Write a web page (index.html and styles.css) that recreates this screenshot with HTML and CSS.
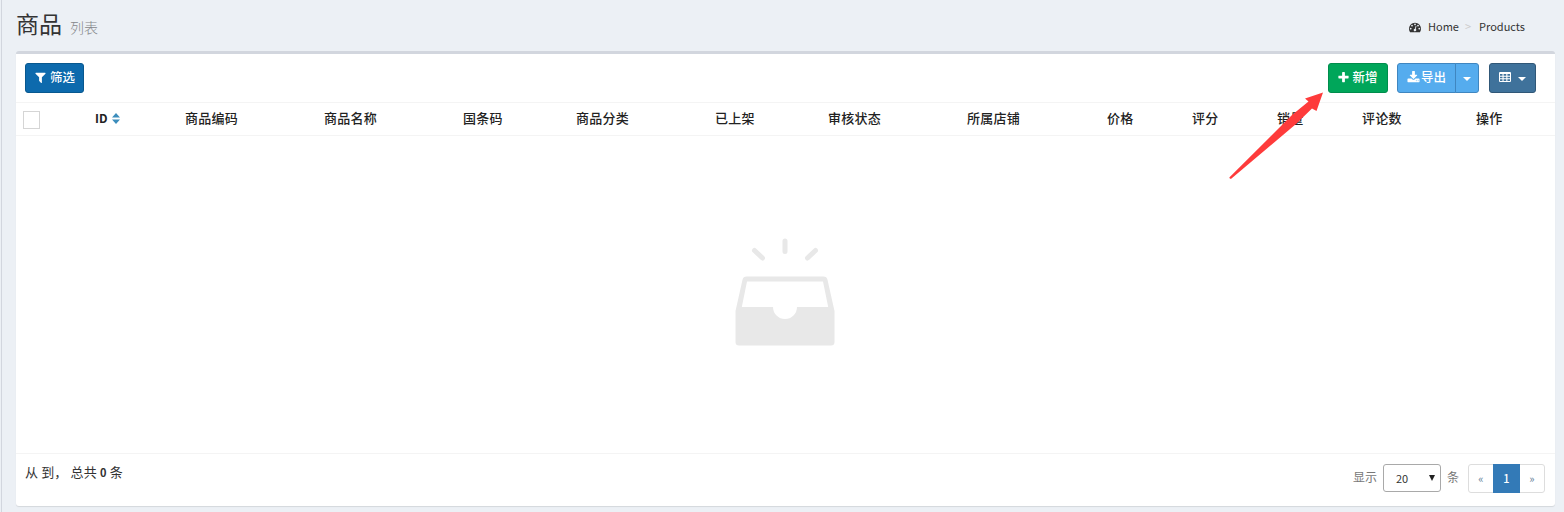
FILE: index.html
```html
<!DOCTYPE html>
<html lang="zh-CN">
<head>
<meta charset="utf-8">
<title>商品</title>
<link rel="stylesheet" href="styles.css">
</head>
<body>
<div class="page">
  <header class="content-header">
    <h1 class="title">商品<small class="subtitle">列表</small></h1>
    <nav class="breadcrumb">
      <svg class="icon-dash" viewBox="0 0 1792 1792"><path d="M384 1152q0-53-37.5-90.5t-90.5-37.5-90.5 37.5-37.5 90.5 37.5 90.5 90.5 37.5 90.5-37.5 37.5-90.5zm192-448q0-53-37.5-90.5t-90.5-37.5-90.5 37.5-37.5 90.5 37.5 90.5 90.5 37.5 90.5-37.5 37.5-90.5zm428 481l101-382q6-26-7.5-48.5t-38.5-29.5-48 6.5-30 39.5l-101 382q-60 5-107 43.5t-63 98.5q-20 77 20 146t117 89 146-20 89-117q16-60-6-117t-72-91zm660-33q0-53-37.5-90.5t-90.5-37.5-90.5 37.5-37.5 90.5 37.5 90.5 90.5 37.5 90.5-37.5 37.5-90.5zm-640-640q0-53-37.5-90.5t-90.5-37.5-90.5 37.5-37.5 90.5 37.5 90.5 90.5 37.5 90.5-37.5 37.5-90.5zm448 192q0-53-37.5-90.5t-90.5-37.5-90.5 37.5-37.5 90.5 37.5 90.5 90.5 37.5 90.5-37.5 37.5-90.5zm320 448q0 261-141 483-19 29-54 29h-1402q-35 0-54-29-141-221-141-483 0-182 71-348t191-286 286-191 348-71 348 71 286 191 191 286 71 348z"/></svg>
      <span>Home</span><span class="crumb-sep">&gt;</span><span>Products</span>
    </nav>
  </header>

  <main class="box">
    <div class="toolbar">
      <button class="btn btn-filter">
        <svg class="icon" viewBox="0 0 1792 1792"><path d="M1595 295q17 41-14 70l-493 493v742q0 42-39 59-13 5-25 5-27 0-45-19l-256-256q-19-19-19-45v-486l-493-493q-31-29-14-70 17-39 59-39h1280q42 0 59 39z"/></svg>
        <span>筛选</span>
      </button>
      <div class="actions">
        <button class="btn btn-new">
          <svg class="icon" viewBox="0 0 1792 1792"><path d="M1600 736v192q0 40-28 68t-68 28h-416v416q0 40-28 68t-68 28h-192q-40 0-68-28t-28-68v-416h-416q-40 0-68-28t-28-68v-192q0-40 28-68t68-28h416v-416q0-40 28-68t68-28h192q40 0 68 28t28 68v416h416q40 0 68 28t28 68z"/></svg>
          <span>新增</span>
        </button>
        <div class="btn-group">
          <button class="btn btn-export">
            <svg class="icon icon-down" viewBox="0 0 1792 1792"><path d="M1344 1344q0-26-19-45t-45-19-45 19-19 45 19 45 45 19 45-19 19-45zm256 0q0-26-19-45t-45-19-45 19-19 45 19 45 45 19 45-19 19-45zm128-224v320q0 40-28 68t-68 28h-1472q-40 0-68-28t-28-68v-320q0-40 28-68t68-28h465l135 136q58 56 136 56t136-56l136-136h464q40 0 68 28t28 68zm-325-569q17 41-14 70l-448 448q-18 19-45 19t-45-19l-448-448q-31-29-14-70 17-39 59-39h256v-448q0-26 19-45t45-19h256q26 0 45 19t19 45v448h256q42 0 59 39z"/></svg>
            <span>导出</span>
          </button>
          <button class="btn btn-export-more"><i class="caret"></i></button>
        </div>
        <button class="btn btn-columns">
          <svg class="icon-grid" viewBox="0 0 12 10"><path fill-rule="evenodd" d="M1 0h10a1 1 0 0 1 1 1v8a1 1 0 0 1-1 1H1a1 1 0 0 1-1-1V1a1 1 0 0 1 1-1zM1 2v1.800h2.500V2zM4.600 2v1.800h2.700V2zM8.400 2v1.800H11V2zM1 4.700v1.600h2.500V4.700zM4.600 4.700v1.600h2.700V4.700zM8.400 4.700v1.600H11V4.700zM1 7.200V9h2.500V7.200zM4.600 7.200V9h2.700V7.200zM8.400 7.200V9H11V7.200z"/></svg>
          <i class="caret"></i>
        </button>
      </div>
    </div>

    <div class="table-head">
      <div class="th-check"><span class="checkbox"></span></div>
      <div class="th th-id">ID<svg class="icon-sort" viewBox="0 0 8 11"><path d="M4 0l4 4.600H0zM4 11L0 6.400h8z"/></svg></div>
      <div class="th">商品编码</div>
      <div class="th">商品名称</div>
      <div class="th">国条码</div>
      <div class="th">商品分类</div>
      <div class="th">已上架</div>
      <div class="th">审核状态</div>
      <div class="th">所属店铺</div>
      <div class="th">价格</div>
      <div class="th">评分</div>
      <div class="th">销量</div>
      <div class="th">评论数</div>
      <div class="th">操作</div>
    </div>

    <div class="empty">
      <svg class="icon-empty" viewBox="0 0 100 108">
        <path fill-rule="evenodd" d="M11.500 38.500h77q3.200 0 4 3.200L99.500 73v31q0 3.500-3.500 3.500H4Q.5 107.500.5 104V73L7.500 41.700q.8-3.200 4-3.200zM12 43.500L6.800 69H38a12 12 0 0 0 24 0h31.200L88 43.500z"/>
        <path class="ray" d="M50 3v10.500M19.500 12.500l8 7.500M80.500 12.500l-8 7.500"/>
      </svg>
    </div>

    <footer class="box-footer">
      <div class="summary">从 到， 总共 <b>0</b> 条</div>
      <div class="pager">
        <span class="pager-label">显示</span>
        <div class="select"><span>20</span><i class="select-arrow"></i></div>
        <span class="pager-label">条</span>
        <div class="pagination">
          <span class="page-item">«</span><span class="page-item current">1</span><span class="page-item">»</span>
        </div>
      </div>
    </footer>
  </main>
  <svg class="pointer" viewBox="0 0 94 88"><path d="M1 86.800L.3 85.500 63 23 79.500 9.500 76 6.500 94 .5 87.500 19 83 16.500 67 32 2.200 86.800z" class="pointer-shape"/></svg>
</div>
</body>
</html>
```
FILE: styles.css
```css
* { box-sizing: border-box; }

body {
  margin: 0;
  font-family: "Noto Sans CJK SC", sans-serif;
  font-size: 13px;
  color: #333;
  background: #ecf0f5;
}

.page {
  position: relative;
  height: 512px;
  margin-left: 1px;
  padding: 0 9px 0 14px;
  border-left: 1px solid #d2d6de;
  overflow: hidden;
}

svg { display: block; fill: currentColor; flex: none; }

.content-header {
  display: flex;
  justify-content: space-between;
  height: 51px;
  padding-right: 30px;
}

.title {
  display: flex;
  align-items: baseline;
  gap: 8px;
  margin: 0;
  font-size: 23px;
  font-weight: 400;
  line-height: 46px;
}

.subtitle { font-size: 14px; color: #85878b; font-weight: 300; }

.breadcrumb {
  display: flex;
  align-items: center;
  height: 52px;
  font-size: 11px;
  color: #333;
}

.icon-dash { width: 12px; height: 12px; margin: 1px 7px 0 0; color: #333; }
.crumb-sep { margin: 0 8px 0 6px; color: #ccc; }

.box {
  height: 455px;
  background: #fff;
  border-top: 3px solid #d2d6de;
  border-radius: 3px;
  box-shadow: 0 1px 1px rgba(0, 0, 0, .1);
}

.toolbar {
  display: flex;
  justify-content: space-between;
  height: 48px;
  padding: 9px 19px 0 9px;
}

.actions { display: flex; gap: 9px; }
.btn-group { display: flex; margin-right: 1px; }

.btn {
  display: flex;
  align-items: center;
  justify-content: center;
  height: 30px;
  padding: 0 0 2px;
  border: 1px solid;
  border-radius: 3px;
  color: #fff;
  font: 500 12.500px/20px "Noto Sans CJK SC", sans-serif;
}

.icon { width: 13px; height: 13px; margin-top: 1px; }
.icon-down { margin-top: 0; }
.btn-filter { width: 59px; gap: 3px; background: #0d6aad; border-color: #08588f; }
.btn-new { width: 60px; padding-right: 1px; gap: 2px; background: #00a65a; border-color: #008d4c; }
.btn-export { width: 59px; gap: 1px; background: #55acee; border-color: #3f86c0; border-radius: 3px 0 0 3px; }
.btn-export-more { width: 24px; margin-left: -1px; background: #55acee; border-color: #3f86c0; border-radius: 0 3px 3px 0; }
.btn-columns { width: 47px; gap: 7px; background: #3f729b; border-color: #305777; }
.icon-grid { width: 12px; height: 10px; }

.caret {
  margin-top: 4px;
  border-top: 4px solid #fff;
  border-left: 4px solid transparent;
  border-right: 4px solid transparent;
}

.table-head {
  display: grid;
  grid-template-columns: 71px 90px 139px 139px 113px 139px 113px 139px 140px 85px 85px 85px 114px 87px;
  height: 34px;
  border-top: 1px solid #f4f4f4;
  border-bottom: 1px solid #f4f4f4;
}

.th {
  display: flex;
  align-items: center;
  padding: 0 0 3px 8px;
  color: #222;
  font-weight: 500;
  letter-spacing: .25px;
  white-space: nowrap;
}

.th-id { font-size: 12px; font-weight: 700; letter-spacing: 0; }
.th-check { padding: 8px 0 0 7px; }
.checkbox { display: block; width: 17px; height: 18px; border: 1px solid #d5d5d5; background: #fff; }
.icon-sort { width: 8px; height: 11px; margin: 1px 0 0 4px; color: #3c8dbc; }

.empty { display: flex; justify-content: center; height: 317px; padding: 102px 2px 0 0; }
.icon-empty { width: 100px; height: 108px; fill: #e8e8e8; }
.ray { fill: none; stroke: #e8e8e8; stroke-width: 5; stroke-linecap: round; }

.box-footer {
  display: flex;
  justify-content: space-between;
  padding: 10px 10px 0 9px;
  border-top: 1px solid #f4f4f4;
}

.summary { line-height: 15px; letter-spacing: .15px; }
.summary b { font-size: 11px; }

.pager { display: flex; }
.pager-label { line-height: 26px; font-size: 12px; color: #777; }

.select {
  display: flex;
  align-items: center;
  justify-content: space-between;
  width: 58px;
  height: 28px;
  margin: 0 6px;
  padding: 0 5px 1px 12px;
  border: 1px solid #a9a9a9;
  border-radius: 3px;
  font-size: 11px;
}

.select-arrow {
  border-top: 6px solid #222;
  border-left: 3px solid transparent;
  border-right: 3px solid transparent;
}

.pagination {
  display: flex;
  width: 77px;
  height: 29px;
  margin-left: 9px;
  border: 1px solid #ddd;
  border-radius: 3px;
}

.page-item {
  flex: 1;
  line-height: 26px;
  text-align: center;
  font-size: 11px;
  color: #5f8096;
}

.page-item.current { flex: 0 0 27px; margin: -1px 0; line-height: 28px; color: #fff; background: #337ab7; font-weight: 500; }

/* callout arrow over the table header */
.pointer { position: absolute; left: 1229px; top: 92px; width: 94px; height: 88px; margin-left: -2px; }
.pointer-shape { fill: #fe3b3b; }
```
